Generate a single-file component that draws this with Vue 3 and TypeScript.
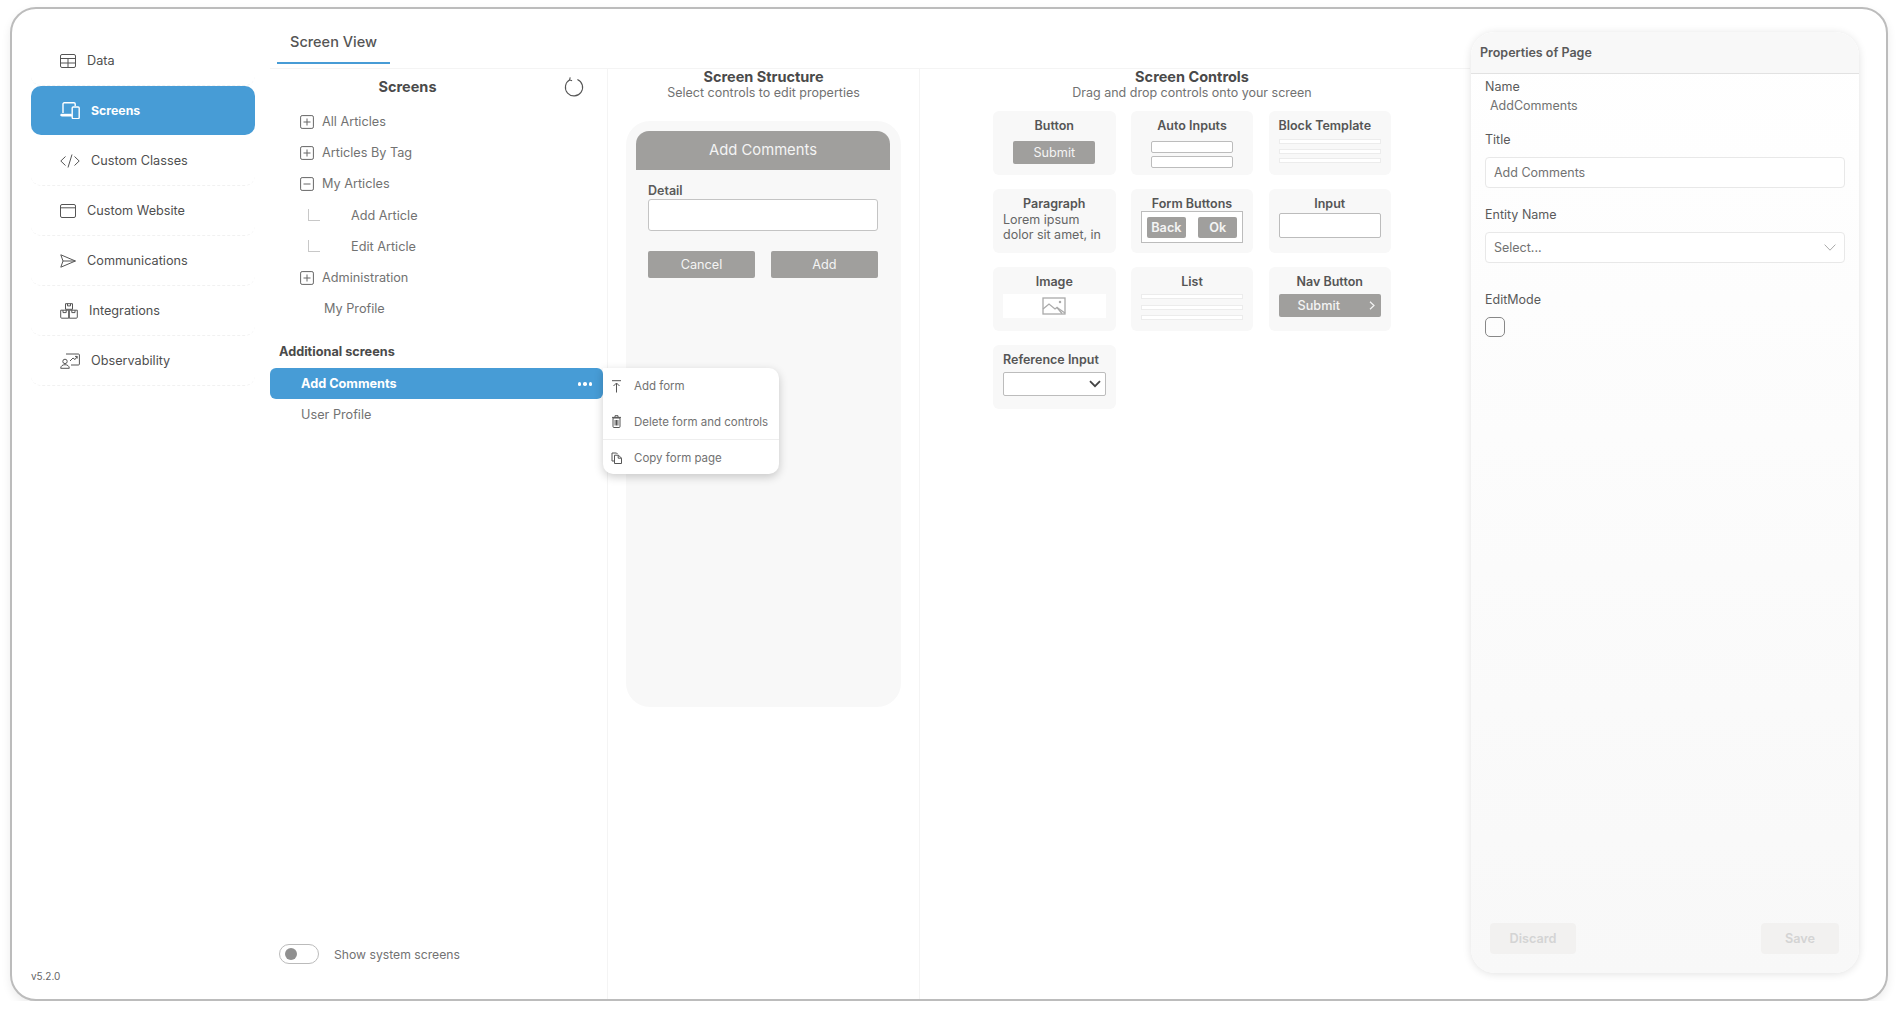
<script setup lang="ts">
interface NavItem {
  label: string;
  width: number;
  height: number;
  paths: string[];
  active?: boolean;
}

interface TreeRow {
  label: string;
  kind: "plus" | "minus" | "child" | "leaf";
}

const navItems: NavItem[] = [
  {
    label: "Data",
    width: 16,
    height: 14,
    paths: ["M2 .5h12a1.5 1.5 0 0 1 1.5 1.5v10a1.5 1.5 0 0 1-1.5 1.5H2A1.5 1.5 0 0 1 .5 12V2A1.5 1.5 0 0 1 2 .5z", "M.5 4.5h15", "M.5 9h15", "M8 4.5v9"],
  },
  {
    label: "Screens",
    width: 20,
    height: 17,
    active: true,
    paths: ["M3 11V2a1.2 1.2 0 0 1 1.2-1.2H14a1.2 1.2 0 0 1 1.2 1.2v2", "M.8 12.5h11", "M.8 12.5c0 .8.5 1.2 1.2 1.2h10", "M13.2 5h5a1 1 0 0 1 1 1v9.6a1 1 0 0 1-1 1h-5a1 1 0 0 1-1-1V6a1 1 0 0 1 1-1z"],
  },
  {
    label: "Custom Classes",
    width: 20,
    height: 14,
    paths: ["M5.5 2.5.8 7l4.7 4.5", "M14.5 2.5 19.2 7l-4.7 4.5", "M12 .5 8 13.5"],
  },
  {
    label: "Custom Website",
    width: 16,
    height: 14,
    paths: ["M2 .5h12a1.5 1.5 0 0 1 1.5 1.5v10a1.5 1.5 0 0 1-1.5 1.5H2A1.5 1.5 0 0 1 .5 12V2A1.5 1.5 0 0 1 2 .5z", "M.5 3.8h15"],
  },
  {
    label: "Communications",
    width: 16,
    height: 14,
    paths: ["M.8.8 15.4 7 .8 13.2 3 7z", "M3 7h12.4"],
  },
  {
    label: "Integrations",
    width: 18,
    height: 16,
    paths: ["M5.5.7h7v5.6h-7z", "M7.5.7v2.2h3V.7", "M.7 7.2h8v8h-7a1 1 0 0 1-1-1z", "M9.3 7.2h8v7a1 1 0 0 1-1 1h-7z", "M3 7.2v2.4h3.2V7.2", "M11.8 7.2v2.4H15V7.2"],
  },
  {
    label: "Observability",
    width: 20,
    height: 16,
    paths: ["M6 1h12.4a1 1 0 0 1 1 1v9a1 1 0 0 1-1 1H11", "M10 8l3-3 2 1.6L17 3.6", "M15 3.4h2.2v2.2", "M5 6.2a2.2 2.2 0 1 1 0 4.4 2.2 2.2 0 0 1 0-4.4z", "M.7 15.3c0-2.4 2-3.6 4.3-3.6s4.3 1.2 4.3 3.6z"],
  },
];

const treeRows: TreeRow[] = [
  { label: "All Articles", kind: "plus" },
  { label: "Articles By Tag", kind: "plus" },
  { label: "My Articles", kind: "minus" },
  { label: "Add Article", kind: "child" },
  { label: "Edit Article", kind: "child" },
  { label: "Administration", kind: "plus" },
  { label: "My Profile", kind: "leaf" },
];
</script>

<template>
  <div class="window">
    <aside class="sidebar">
      <nav class="nav">
        <a v-for="item in navItems" :key="item.label" class="nav-item" :class="{ active: item.active }">
          <svg class="nav-icon" :width="item.width" :height="item.height" :viewBox="`0 0 ${item.width} ${item.height}`">
            <path v-for="d in item.paths" :key="d" :d="d" />
          </svg>
          <span>{{ item.label }}</span>
        </a>
      </nav>
      <div class="version">v5.2.0</div>
    </aside>

    <main class="main">
      <div class="tabs">
        <div class="tab">Screen View</div>
      </div>
      <div class="columns">
        <section class="screens">
          <div class="screens-head">
            <h2>Screens</h2>
            <svg class="refresh" width="20" height="20" viewBox="0 0 20 20">
              <path d="M13.4 2.4a8.6 8.6 0 1 1-7.6.4" />
              <path d="M6.2 .4l-.6 2.5 2.5.8" />
            </svg>
          </div>
          <ul class="tree">
            <li v-for="row in treeRows" :key="row.label" class="tree-row" :class="row.kind">
              <svg v-if="row.kind === 'plus' || row.kind === 'minus'" class="toggle-icon" width="14" height="14" viewBox="0 0 14 14">
                <rect x=".6" y=".6" width="12.8" height="12.8" rx="1.5" />
                <path d="M3.5 7h7" />
                <path v-if="row.kind === 'plus'" d="M7 3.5v7" />
              </svg>
              <span v-if="row.kind === 'child'" class="elbow"></span>
              <span>{{ row.label }}</span>
            </li>
          </ul>
          <h3 class="additional">Additional screens</h3>
          <div class="screen-row selected">
            <span>Add Comments</span>
            <span class="dots"><i></i><i></i><i></i></span>
            <div class="context-menu">
              <div class="menu-item">
                <svg width="10" height="13" viewBox="0 0 10 13"><path d="M.5.7h9" /><path d="M5 12.5V3.2" /><path d="M2 6l3-3 3 3" /></svg>
                <span>Add form</span>
              </div>
              <div class="menu-item">
                <svg width="10" height="13" viewBox="0 0 10 13"><path d="M1.5 3h7v8.5a1 1 0 0 1-1 1h-5a1 1 0 0 1-1-1z" /><path d="M.5 2.4h9" /><path d="M3.5 2V.7h3V2" /><path d="M3.6 5v5.5M5 5v5.5M6.4 5v5.5" /></svg>
                <span>Delete form and controls</span>
              </div>
              <div class="menu-item divided">
                <svg width="11" height="12" viewBox="0 0 11 12"><path d="M3 9H1V1h4.5l1 1" /><path d="M3.5 3.2h4l3 3v5.3h-7z" /><path d="M7.2 3.2v3h3.3" /></svg>
                <span>Copy form page</span>
              </div>
            </div>
          </div>
          <div class="screen-row">User Profile</div>
          <div class="system-toggle">
            <span class="switch"><i></i></span>
            <span>Show system screens</span>
          </div>
        </section>

        <section class="structure">
          <h2>Screen Structure</h2>
          <p>Select controls to edit properties</p>
          <div class="phone">
            <div class="phone-title">Add Comments</div>
            <div class="phone-form">
              <label>Detail</label>
              <div class="phone-input"></div>
              <div class="phone-buttons">
                <div class="gray-btn">Cancel</div>
                <div class="gray-btn">Add</div>
              </div>
            </div>
          </div>
        </section>

        <section class="controls">
          <div class="controls-inner">
            <h2>Screen Controls</h2>
            <p>Drag and drop controls onto your screen</p>
            <div class="control-grid">
              <div class="card">
                <h4>Button</h4>
                <div class="gray-btn small">Submit</div>
              </div>
              <div class="card">
                <h4>Auto Inputs</h4>
                <div class="mini-input"></div>
                <div class="mini-input second"></div>
              </div>
              <div class="card left">
                <h4>Block Template</h4>
                <div class="lines tight"><i></i><i></i><i></i></div>
              </div>
              <div class="card">
                <h4>Paragraph</h4>
                <div class="lorem">Lorem ipsum<br />dolor sit amet, in</div>
              </div>
              <div class="card">
                <h4>Form Buttons</h4>
                <div class="form-buttons">
                  <div class="gray-btn bold">Back</div>
                  <div class="gray-btn bold">Ok</div>
                </div>
              </div>
              <div class="card">
                <h4>Input</h4>
                <div class="big-input"></div>
              </div>
              <div class="card">
                <h4>Image</h4>
                <div class="image-box">
                  <svg width="24" height="18" viewBox="0 0 24 18">
                    <rect x="1" y="1" width="22" height="16" />
                    <path d="M1 12l6-5 6 5 2-1.5 5 6" />
                    <path d="M15 10.5 23 16" />
                    <circle cx="18" cy="5" r=".6" />
                  </svg>
                </div>
              </div>
              <div class="card">
                <h4>List</h4>
                <div class="lines"><i></i><i></i><i></i></div>
              </div>
              <div class="card">
                <h4>Nav Button</h4>
                <div class="nav-btn">
                  <span>Submit</span>
                  <svg width="6" height="9" viewBox="0 0 6 9"><path d="M1 .8l4 3.7-4 3.7" /></svg>
                </div>
              </div>
              <div class="card left">
                <h4>Reference Input</h4>
                <div class="ref-input">
                  <svg width="12" height="8" viewBox="0 0 12 8"><path d="M1 1.2l5 5 5-5" /></svg>
                </div>
              </div>
            </div>
          </div>
        </section>
      </div>
    </main>

    <aside class="props">
      <header class="props-head">Properties of Page</header>
      <div class="props-body">
        <label class="first">Name</label>
        <div class="static-value">AddComments</div>
        <label class="title-label">Title</label>
        <div class="field">Add Comments</div>
        <label class="entity-label">Entity Name</label>
        <div class="field select">
          <span>Select...</span>
          <svg width="12" height="7" viewBox="0 0 12 7"><path d="M.6.6 6 6.2 11.4.6" /></svg>
        </div>
        <label class="edit-label">EditMode</label>
        <div class="checkbox"></div>
        <div class="props-actions">
          <div class="ghost discard">Discard</div>
          <div class="ghost save">Save</div>
        </div>
      </div>
    </aside>
  </div>
</template>

<style scoped>
.window {
  box-sizing: border-box;
  display: flex;
  width: 1878px;
  height: 994px;
  margin: 7px 0 0 10px;
  border: 2px solid #bcbcbc;
  border-radius: 26px;
  background: #fff;
  box-shadow: 0 4px 10px rgba(0, 0, 0, 0.08);
  font-family: Inter, "Liberation Sans", sans-serif;
  font-size: 12.7px;
  color: #5a5a5a;
}

h2, h3, h4, p, ul, label {
  margin: 0;
  padding: 0;
}

/* sidebar */
.sidebar {
  flex: 0 0 258px;
  box-sizing: border-box;
  display: flex;
  flex-direction: column;
  padding: 27px 15px 17px 19px;
}

.nav-item {
  box-sizing: border-box;
  display: flex;
  align-items: center;
  gap: 11px;
  height: 50px;
  padding-left: 29px;
  border-bottom: 1px dashed #f1f1f1;
  border-radius: 10px;
  color: #4f4f4f;
}

.nav-item.active {
  height: 49px;
  margin-bottom: 1px;
  background: #479cd6;
  color: #fff;
  font-size: 12.3px;
  font-weight: 700;
  border-bottom: 0;
}

.nav-icon {
  fill: none;
  stroke: #555;
  stroke-width: 1;
}

.active .nav-icon {
  stroke: #fff;
  stroke-width: 1.4;
}

.version {
  margin-top: auto;
  font-size: 10px;
  color: #666;
}

/* main */
.main {
  flex: 0 0 1200px;
  display: flex;
  flex-direction: column;
}

.tabs {
  flex: 0 0 60px;
  box-sizing: border-box;
  border-bottom: 1px solid #f4f4f4;
  padding-left: 7px;
}

.tab {
  box-sizing: border-box;
  width: 113px;
  height: 55px;
  padding-top: 24px;
  border-bottom: 2px solid #479cd6;
  text-align: center;
  font-size: 14.5px;
  font-weight: 500;
  line-height: 18px;
  color: #555;
}

.columns {
  flex: 1;
  display: flex;
  min-height: 0;
}

.screens {
  flex: 0 0 338px;
  box-sizing: border-box;
  display: flex;
  flex-direction: column;
  padding-bottom: 35px;
  border-right: 1px solid #f4f4f4;
}

.screens-head {
  position: relative;
  height: 37px;
  padding: 8px 62px 0 0;
  box-sizing: border-box;
  text-align: center;
}

.screens-head h2 {
  font-size: 14.5px;
  font-weight: 700;
  line-height: 20px;
  color: #4a4a4a;
}

.refresh {
  position: absolute;
  top: 8px;
  right: 23px;
  fill: none;
  stroke: #555;
  stroke-width: 1.1;
}

.tree {
  list-style: none;
}

.tree-row {
  display: flex;
  align-items: center;
  height: 31.2px;
  padding-left: 30px;
  color: #727272;
}

.toggle-icon {
  margin-right: 8px;
  fill: none;
  stroke: #666;
  stroke-width: 1;
}

.tree-row.leaf {
  padding-left: 54px;
}

.tree-row.child {
  padding-left: 38px;
}

.elbow {
  box-sizing: border-box;
  width: 12px;
  height: 12px;
  margin-right: 31px;
  border-left: 1px solid #c8c8c8;
  border-bottom: 1px solid #c8c8c8;
}

.additional {
  margin: 20px 0 8px 9px;
  font-size: 12.7px;
  font-weight: 700;
  line-height: 16px;
  color: #4a4a4a;
}

.screen-row {
  position: relative;
  display: flex;
  align-items: center;
  justify-content: space-between;
  height: 31px;
  margin-right: 4px;
  padding: 0 11px 0 31px;
  border-radius: 6px;
  color: #727272;
}

.screen-row.selected {
  z-index: 5;
  background: #479cd6;
  color: #fff;
  font-weight: 700;
}

.dots {
  display: flex;
  gap: 2px;
}

.dots i {
  width: 3.5px;
  height: 3.5px;
  border-radius: 50%;
  background: #fff;
}

.context-menu {
  position: absolute;
  top: 0;
  left: 100%;
  width: 176px;
  height: 106px;
  border-radius: 0 10px 10px 10px;
  background: #fff;
  box-shadow: 0 3px 10px rgba(0, 0, 0, 0.2);
  color: #727272;
  font-size: 11.5px;
  font-weight: 400;
}

.menu-item {
  box-sizing: border-box;
  display: flex;
  align-items: center;
  height: 35.5px;
  padding-left: 8px;
}

.menu-item.divided {
  border-top: 1px solid #eee;
}

.menu-item svg {
  flex: 0 0 11px;
  margin-right: 12px;
  fill: none;
  stroke: #555;
  stroke-width: 1;
}

.system-toggle {
  display: flex;
  align-items: center;
  gap: 15px;
  margin: auto 0 0 9px;
  font-size: 12.2px;
  color: #727272;
}

.switch {
  box-sizing: border-box;
  display: flex;
  align-items: center;
  width: 40px;
  height: 20px;
  padding-left: 5px;
  border: 1px solid #bbb;
  border-radius: 10px;
}

.switch i {
  width: 12px;
  height: 12px;
  border-radius: 50%;
  background: #909090;
}

/* structure */
.structure {
  flex: 0 0 312px;
  box-sizing: border-box;
  padding-left: 18px;
  padding-right: 18px;
  border-right: 1px solid #f4f4f4;
  text-align: center;
}

.structure h2, .controls h2 {
  font-size: 14.5px;
  font-weight: 700;
  line-height: 16px;
  color: #4a4a4a;
}

.structure p, .controls p {
  font-size: 12.5px;
  line-height: 16px;
  color: #727272;
}

.phone {
  box-sizing: border-box;
  height: 586px;
  margin-top: 20px;
  padding: 10px 11px 10px 10px;
  border-radius: 24px;
  background: #f8f8f8;
}

.phone-title {
  height: 39px;
  border-radius: 13px 13px 0 0;
  background: #a09f9d;
  color: #f4f4f4;
  font-size: 14.8px;
  line-height: 39px;
}

.phone-form {
  padding: 13px 12px 0;
  text-align: left;
}

.phone-form label {
  display: block;
  font-size: 12.5px;
  font-weight: 600;
  line-height: 16px;
}

.phone-input {
  box-sizing: border-box;
  height: 32px;
  border: 1px solid #c4c4c4;
  border-radius: 3px;
  background: #fff;
}

.phone-buttons {
  display: flex;
  gap: 16px;
  margin-top: 20px;
}

.gray-btn {
  flex: 1;
  height: 27px;
  border-radius: 2px;
  background: #a09f9d;
  color: #f4f4f4;
  line-height: 27px;
  text-align: center;
}

/* controls */
.controls {
  flex: 1;
  padding-left: 73px;
}

.controls-inner {
  width: 398px;
  text-align: center;
}

.control-grid {
  display: grid;
  grid-template-columns: repeat(3, 122.5px);
  gap: 14.5px 15.25px;
  margin-top: 10px;
}

.card {
  box-sizing: border-box;
  height: 63.5px;
  padding: 7px 10px 0;
  border-radius: 6px;
  background: #f8f8f8;
}

.card h4 {
  font-size: 12.5px;
  font-weight: 600;
  line-height: 16px;
  white-space: nowrap;
  color: #555;
}

.card.left h4 {
  text-align: left;
}

.gray-btn.small {
  width: 82px;
  height: 23px;
  margin: 7px auto 0;
  line-height: 23px;
}

.mini-input {
  box-sizing: border-box;
  width: 82px;
  height: 12px;
  margin: 7px auto 0;
  border: 1px solid #bcbcbc;
  border-radius: 2px;
  background: #fff;
}

.mini-input.second {
  margin-top: 3px;
}

.lines {
  display: flex;
  flex-direction: column;
  gap: 5.5px;
  margin-top: 4px;
}

.lines.tight {
  gap: 4.5px;
  margin-top: 5px;
}

.lines i {
  display: block;
  height: 5px;
  border: 1px solid #ececec;
  box-sizing: border-box;
  background: #fff;
}

.lorem {
  font-size: 12.5px;
  line-height: 15px;
  text-align: left;
  white-space: nowrap;
  color: #666;
}

.form-buttons {
  box-sizing: border-box;
  display: flex;
  gap: 12px;
  height: 32px;
  margin-top: -1px;
  padding: 5px;
  border: 1px solid #bcbcbc;
  background: #fff;
}

.gray-btn.bold {
  height: 21px;
  font-weight: 600;
  line-height: 21px;
}

.big-input {
  box-sizing: border-box;
  height: 25px;
  margin-top: 1px;
  border: 1px solid #bcbcbc;
  border-radius: 2px;
  background: #fff;
}

.image-box {
  display: flex;
  align-items: center;
  justify-content: center;
  height: 24px;
  margin-top: 4px;
  background: #fff;
}

.image-box svg {
  fill: none;
  stroke: #aaa;
  stroke-width: 1.3;
}

.nav-btn {
  display: flex;
  align-items: center;
  justify-content: space-between;
  height: 23px;
  margin-top: 4px;
  padding: 0 6px 0 19px;
  border-radius: 2px;
  background: #a09f9d;
  color: #f4f4f4;
  font-weight: 500;
}

.nav-btn svg {
  fill: none;
  stroke: #f4f4f4;
  stroke-width: 1.2;
}

.ref-input {
  box-sizing: border-box;
  display: flex;
  align-items: center;
  justify-content: flex-end;
  height: 24px;
  margin-top: 4px;
  padding-right: 4px;
  border: 1px solid #bcbcbc;
  border-radius: 2px;
  background: #fff;
}

.ref-input svg {
  fill: none;
  stroke: #444;
  stroke-width: 1.8;
}

/* properties */
.props {
  flex: 0 0 388px;
  box-sizing: border-box;
  display: flex;
  flex-direction: column;
  height: 941px;
  margin: 23px 0 0 1px;
  border-radius: 24px;
  background: linear-gradient(#fff, #f8f8f8);
  box-shadow: 0 1px 8px rgba(0, 0, 0, 0.12);
}

.props-head {
  box-sizing: border-box;
  height: 42px;
  padding: 0 9px;
  border-bottom: 1px solid #e2e2e2;
  border-radius: 24px 24px 0 0;
  background: #f8f8f8;
  font-size: 12.5px;
  font-weight: 600;
  line-height: 41px;
}

.props-body {
  flex: 1;
  display: flex;
  flex-direction: column;
  padding: 0 14px 19px;
}

.props-body label {
  display: block;
  font-size: 12.5px;
  line-height: 16px;
}

.props-body label.first {
  margin-top: 5px;
}

.static-value {
  margin: 3px 0 0 5px;
  font-size: 12.5px;
  line-height: 16px;
  color: #727272;
}

.props-body label.title-label {
  margin-top: 18px;
}

.field {
  box-sizing: border-box;
  display: flex;
  align-items: center;
  justify-content: space-between;
  height: 30.5px;
  margin-top: 9px;
  padding: 0 8px;
  border: 1px solid #e8e8e8;
  border-radius: 4px;
  background: #fff;
  font-size: 12.5px;
  color: #727272;
}

.field svg {
  fill: none;
  stroke: #aaa;
  stroke-width: 1;
}

.props-body label.entity-label {
  margin-top: 19.5px;
}

.props-body label.edit-label {
  margin-top: 29.5px;
}

.checkbox {
  box-sizing: border-box;
  width: 20px;
  height: 20px;
  margin-top: 8.5px;
  border: 1px solid #888;
  border-radius: 5px;
}

.props-actions {
  display: flex;
  justify-content: space-between;
  margin-top: auto;
  padding: 0 6px 0 5px;
}

.ghost {
  height: 31px;
  border-radius: 4px;
  background: #f2f1f0;
  color: #d4d4d4;
  font-weight: 600;
  line-height: 31px;
  text-align: center;
}

.discard {
  width: 86px;
}

.save {
  width: 78px;
}
</style>

<style>
html, body {
  background: #fff;
}
</style>
